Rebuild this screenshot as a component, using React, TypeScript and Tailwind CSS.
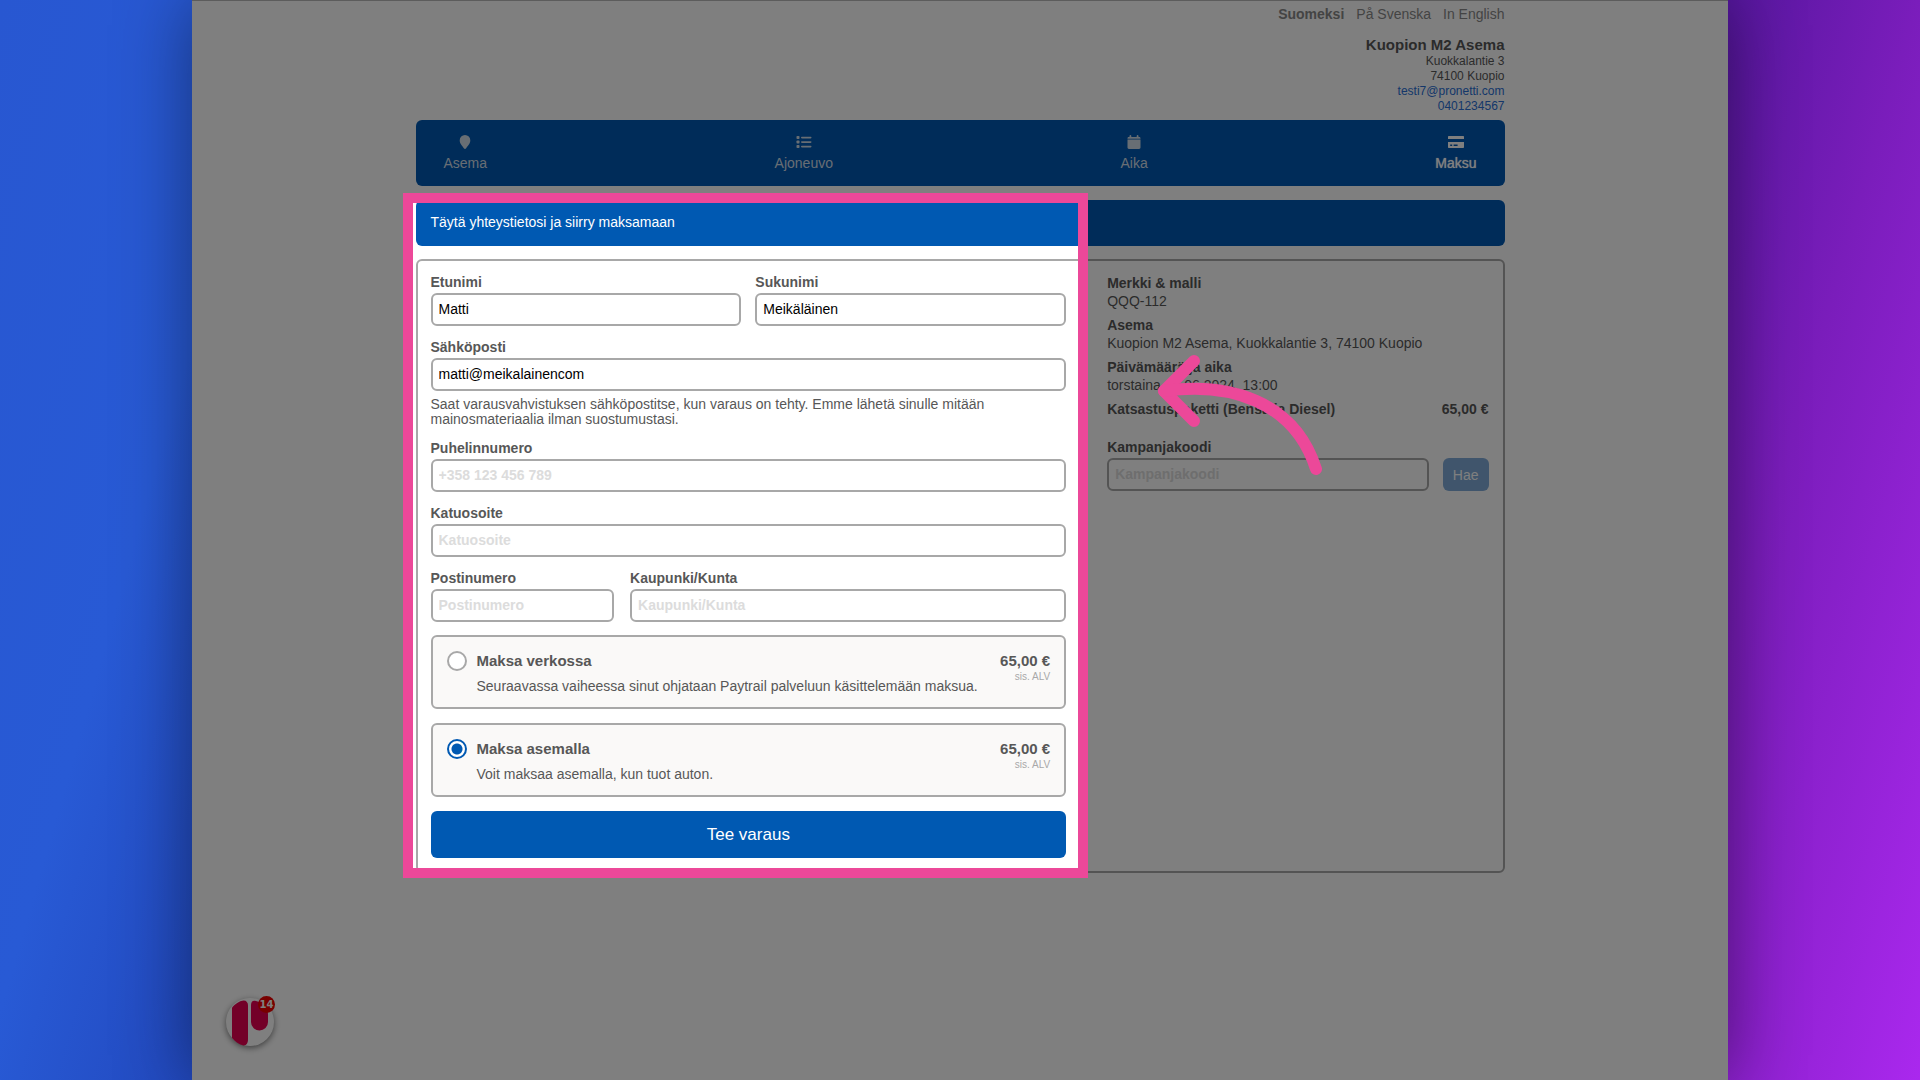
import React from 'react';

const PinIcon = () => (
  <svg width="12" height="16" viewBox="0 0 12 16" fill="currentColor" aria-hidden="true">
    <path d="M6 1a5.3 5.3 0 0 0-5.3 5.4C.7 9.800 4 12.400 4.900 14.300c.4.9 1.800.9 2.200 0C8 12.400 11.300 9.800 11.300 6.400A5.300 5.300 0 0 0 6 1z" />
  </svg>
);

const ListIcon = () => (
  <svg width="16" height="16" viewBox="0 0 16 16" fill="currentColor" aria-hidden="true">
    <rect x="0.500" y="2" width="3" height="3" rx="0.800" />
    <rect x="0.500" y="6.500" width="3" height="3" rx="0.800" />
    <rect x="0.500" y="11" width="3" height="3" rx="0.800" />
    <rect x="5" y="2.700" width="10.500" height="1.700" rx="0.800" />
    <rect x="5" y="7.200" width="10.500" height="1.700" rx="0.800" />
    <rect x="5" y="11.700" width="10.500" height="1.700" rx="0.800" />
  </svg>
);

const CalendarIcon = () => (
  <svg width="14" height="16" viewBox="0 0 14 16" fill="currentColor" aria-hidden="true">
    <path d="M3.400 1c.5 0 .9.4.9.900V3h5.400V1.900c0-.5.4-.9.900-.9s.9.4.9.900V3h.6c.8 0 1.400.5 1.400 1.200v.600H.5v-.600C.5 3.500 1.100 3 1.900 3h.6V1.900c0-.5.4-.9.900-.9z" />
    <path d="M.5 5.600h13v8c0 .8-.6 1.400-1.400 1.400H1.900C1.100 15 .5 14.400.5 13.600z" />
  </svg>
);

const CardIcon = () => (
  <svg width="16" height="16" viewBox="0 0 16 16" fill="currentColor" aria-hidden="true">
    <path d="M1 2h14c.6 0 1 .4 1 1v2H0V3c0-.6.4-1 1-1z" />
    <path
      fillRule="evenodd"
      d="M0 8h16v5c0 .6-.4 1-1 1H1c-.6 0-1-.4-1-1zm2.200 2.500v1.400h2v-1.400zm3.400 0v1.400h4v-1.400z"
    />
  </svg>
);

const steps = [
  { label: 'Asema', icon: PinIcon },
  { label: 'Ajoneuvo', icon: ListIcon },
  { label: 'Aika', icon: CalendarIcon },
  { label: 'Maksu', icon: CardIcon, active: true },
];

const payments = [
  {
    id: 'online',
    title: 'Maksa verkossa',
    text: 'Seuraavassa vaiheessa sinut ohjataan Paytrail palveluun käsittelemään maksua.',
  },
  { id: 'station', title: 'Maksa asemalla', text: 'Voit maksaa asemalla, kun tuot auton.' },
];

const inputClass =
  'block h-[33px] w-full rounded-md border-2 border-[#a8a8a8] bg-transparent px-1.5 pb-0.5 text-[14px] text-black placeholder:font-bold placeholder:text-[#dcdcdc]';

interface FieldProps {
  id: string;
  label: string;
  type?: string;
  value?: string;
  placeholder?: string;
}

const Field: React.FC<FieldProps> = ({ id, label, type = 'text', value, placeholder }) => (
  <div>
    <label htmlFor={id} className="block pb-0.5 text-[14px] leading-[18px] font-bold">
      {label}
    </label>
    <input id={id} type={type} defaultValue={value} placeholder={placeholder} className={inputClass} />
  </div>
);

const Header = () => (
  <header className="flex flex-col items-end pt-[5px] pb-1.5">
    <nav className="flex gap-3 text-[14px] leading-4 text-[#888]">
      <a href="#fi" className="font-bold">Suomeksi</a>
      <a href="#sv">På Svenska</a>
      <a href="#en">In English</a>
    </nav>
    <address className="mt-3.5 text-right text-[12px] leading-[15px] not-italic">
      <h1 className="text-[15px] leading-[18px] font-bold">Kuopion M2 Asema</h1>
      <p>Kuokkalantie 3</p>
      <p>74100 Kuopio</p>
      <a href="mailto:testi7@pronetti.com" className="block text-[#2a6fd4]">testi7@pronetti.com</a>
      <a href="tel:0401234567" className="block text-[#2a6fd4]">0401234567</a>
    </address>
  </header>
);

const Summary = () => (
  <aside className="pt-px text-[14px] leading-[18px]">
    <dl>
      <dt className="font-bold">Merkki &amp; malli</dt>
      <dd className="mb-1.5">QQQ-112</dd>
      <dt className="font-bold">Asema</dt>
      <dd className="mb-1.5">Kuopion M2 Asema, Kuokkalantie 3, 74100 Kuopio</dd>
      <dt className="font-bold">Päivämäärä ja aika</dt>
      <dd className="mb-1.5">torstaina 13.06.2024, 13:00</dd>
    </dl>
    <div className="flex justify-between font-bold">
      <span>Katsastuspaketti (Bensa ja Diesel)</span>
      <span>65,00 €</span>
    </div>
    <form className="mt-5 flex items-end gap-3.5">
      <div className="flex-1">
        <Field id="campaign" label="Kampanjakoodi" placeholder="Kampanjakoodi" />
      </div>
      <button type="button" className="h-[33px] rounded-md bg-[#80abd8] px-2.5 text-[14px] text-white">
        Hae
      </button>
    </form>
  </aside>
);

const BookingForm = () => (
  <form>
    <div className="grid grid-cols-2 gap-3.5">
      <Field id="first" label="Etunimi" value="Matti" />
      <Field id="last" label="Sukunimi" value="Meikäläinen" />
    </div>
    <div className="mt-3">
      <Field id="email" label="Sähköposti" value="matti@meikalainencom" />
      <p className="mt-1.5 max-w-[560px] text-[14px] leading-[15px]">
        Saat varausvahvistuksen sähköpostitse, kun varaus on tehty. Emme lähetä sinulle mitään
        mainosmateriaalia ilman suostumustasi.
      </p>
    </div>
    <div className="mt-3 grid gap-3">
      <Field id="phone" label="Puhelinnumero" type="tel" placeholder="+358 123 456 789" />
      <Field id="street" label="Katuosoite" placeholder="Katuosoite" />
      <div className="grid grid-cols-[8fr_19fr] gap-4">
        <Field id="zip" label="Postinumero" placeholder="Postinumero" />
        <Field id="city" label="Kaupunki/Kunta" placeholder="Kaupunki/Kunta" />
      </div>
    </div>
    <div className="mt-[13px] grid gap-3.5">
      {payments.map((p) => (
        <label
          key={p.id}
          htmlFor={p.id}
          className="flex rounded-md border-2 border-[#a8a8a8] bg-[#faf9f8] px-3.5 pt-3.5 pb-3"
        >
          <input
            id={p.id}
            type="radio"
            name="payment"
            defaultChecked={p.id === 'station'}
            className="mr-2.5 size-5 appearance-none rounded-full border-2 border-[#a8a8a8] bg-white checked:border-[#0059b2] checked:bg-[radial-gradient(circle,#0059b2_5px,white_6px)]"
          />
          <span className="flex-1">
            <span className="block text-[15px] leading-5 font-bold">{p.title}</span>
            <span className="mt-1.5 block text-[14px] leading-[18px]">{p.text}</span>
          </span>
          <span className="text-right">
            <span className="block text-[15px] leading-5 font-bold">65,00 €</span>
            <span className="block text-[10px] leading-3 text-[#a8a8a8]">sis. ALV</span>
          </span>
        </label>
      ))}
    </div>
    <button type="submit" className="mt-3.5 h-[47px] w-full rounded-md bg-[#0059b2] text-[17px] text-white">
      Tee varaus
    </button>
  </form>
);

// Pink frame that dims everything outside it, and the arrow pointing at it
const Spotlight = () => (
  <>
    <div className="pointer-events-none absolute -top-[7px] right-[417px] -bottom-[5px] -left-[13px] z-10 border-10 border-[#ec4899] shadow-[0_0_0_2000px_rgba(0,0,0,0.5)]" />
    <svg
      className="pointer-events-none absolute top-[150px] right-[177px] z-20"
      width="170"
      height="130"
      viewBox="0 0 170 130"
      fill="none"
      stroke="#ec4899"
      strokeWidth="12"
      strokeLinecap="round"
      strokeLinejoin="round"
      aria-hidden="true"
    >
      <path d="M36 11 L6 41 L36 71" />
      <path d="M6 41 C70 32 136 50 158 119" />
    </svg>
  </>
);

const ChatBubble = () => (
  <button
    type="button"
    aria-label="Chat"
    className="absolute bottom-[34px] left-[34px] size-12 rounded-full bg-white shadow-[0_2px_6px_rgba(0,0,0,0.5)]"
  >
    <svg viewBox="0 0 48 48" className="size-12" fill="#e60050" aria-hidden="true">
      <path d="M6 9.500C9 6 13 3 17.500 2.500c3 0 4.500 2 4.500 5V41c0 3.500-1 6.500-4.500 6.500C13 46.500 9 43.500 6 40z" />
      <path d="M25 7c0-3 1.500-4.500 4-4.200C36 4 42 9 42 16v8a8.500 8.500 0 0 1-17 0z" />
    </svg>
    <span className="absolute -top-0.5 -right-px flex size-[17px] items-center justify-center rounded-full bg-[#f00000] font-['DejaVu_Sans'] text-[10px] font-bold text-white">
      14
    </span>
  </button>
);

const App: React.FC = () => {
  return (
    <div className="min-h-screen bg-[linear-gradient(106deg,#2857d1_0%,#285ad5_13%,#2146bb_24%,#1e3a9a_45%,#4c1597_75%,#7a1dbb_86%,#aa28ee_100%)] font-['Liberation_Sans',Arial,sans-serif] text-[#575757]">
      <div className="mx-auto min-h-screen w-4/5 shadow-[0_0_70px_rgba(0,0,0,0.45)]">
        <div className="relative min-h-screen overflow-hidden border-t border-[#5c5c5c] bg-white">
          <div className="mx-auto max-w-[1089px]">
            <Header />
            <nav className="flex h-[66px] justify-between rounded-md bg-[#0059b2] px-7 pt-3.5">
              {steps.map(({ label, icon: StepIcon, active }) => (
                <a
                  key={label}
                  href={`#${label.toLowerCase()}`}
                  className={
                    active
                      ? 'flex flex-col items-center gap-1 text-[14px] leading-[18px] text-white [text-shadow:0_0_1px_white]'
                      : 'flex flex-col items-center gap-1 text-[14px] leading-[18px] text-[#d0dce8]'
                  }
                >
                  <StepIcon />
                  {label}
                </a>
              ))}
            </nav>
            <main className="relative mt-3.5">
              <h2 className="rounded-md bg-[#0059b2] px-[15px] pt-[13px] pb-[15px] text-[14px] leading-[18px] text-white">
                Täytä yhteystietosi ja siirry maksamaan
              </h2>
              <div className="mt-[13px] grid grid-cols-[5fr_3fr] gap-[41px] rounded-md border-2 border-[#a8a8a8] pt-3 pr-3.5 pb-[13px] pl-[13px]">
                <BookingForm />
                <Summary />
              </div>
              <Spotlight />
            </main>
          </div>
          <ChatBubble />
        </div>
      </div>
    </div>
  );
};

export default App;
